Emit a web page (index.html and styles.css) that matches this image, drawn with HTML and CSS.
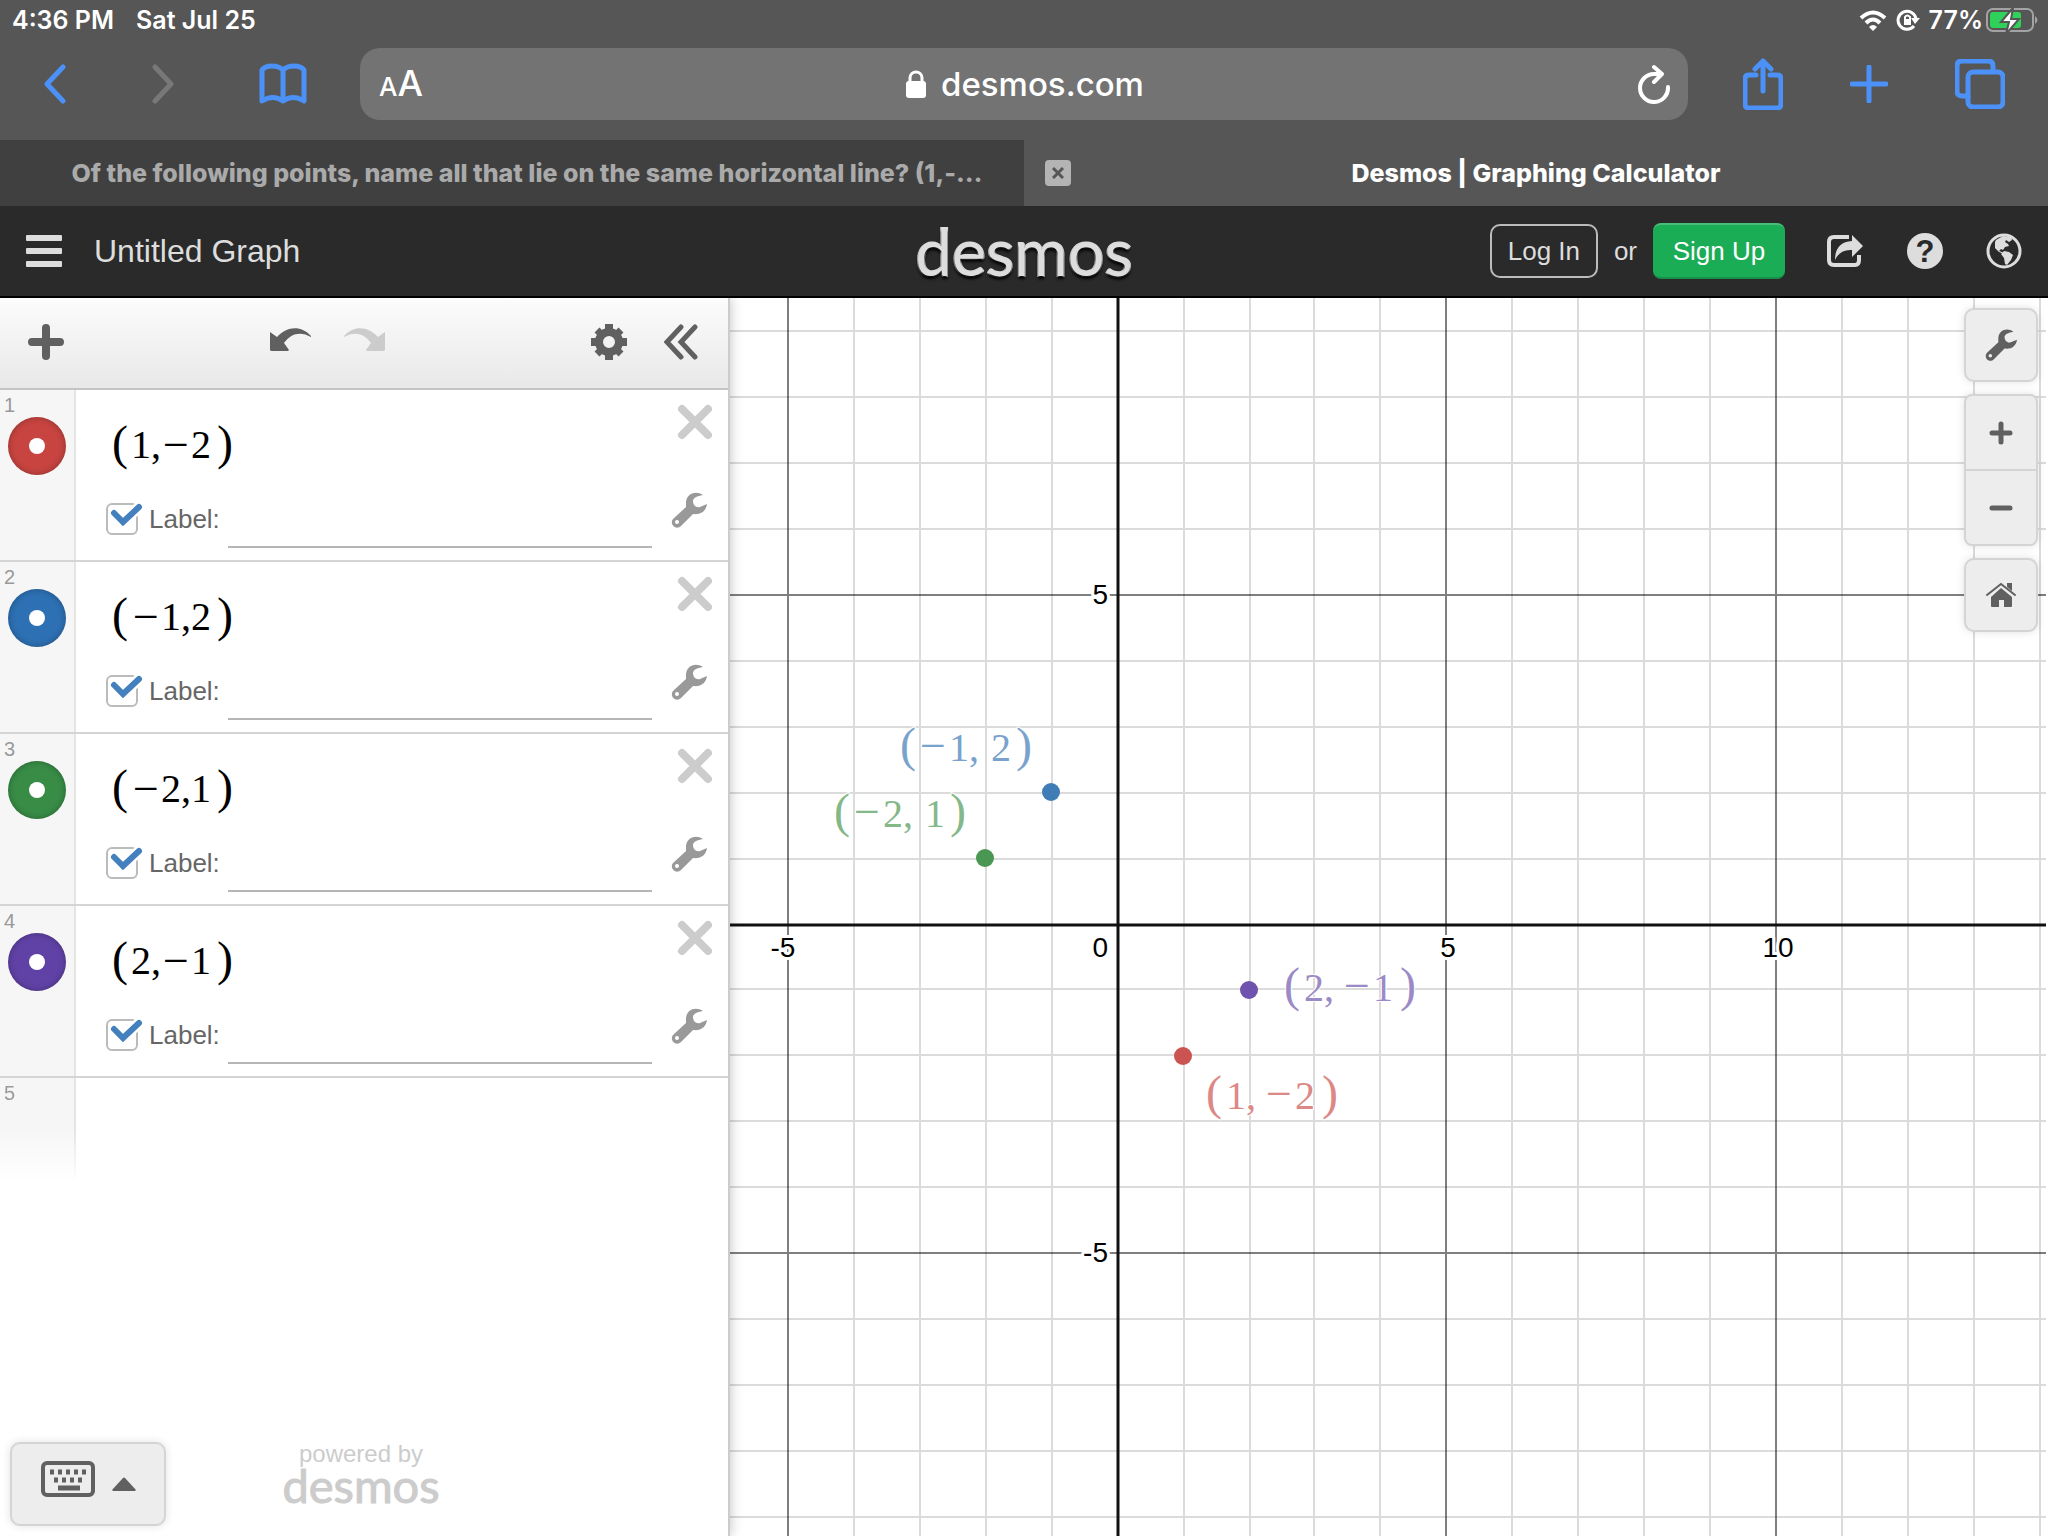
FILE: index.html
```html
<!DOCTYPE html>
<html lang="en">
<head>
<meta charset="utf-8">
<meta name="viewport" content="width=device-width, initial-scale=1">
<title>Desmos | Graphing Calculator</title>
<link rel="stylesheet" href="styles.css">
</head>
<body>
<svg class="defs" aria-hidden="true">
  <symbol id="i-wrench" viewBox="0 0 36 36"><path fill="currentColor" fill-rule="evenodd" d="M32 3C25-2 14 1 15 13v2L2 27c-4 5 3 12 8 7l12-12c8 1 13-3 14-10l-7 3c-4 1-7-2-7-6 0-3 4-5 10-6ZM6 28a2 2 0 1 1 0 4 2 2 0 0 1 0-4Z"/></symbol>
  <symbol id="i-x" viewBox="0 0 36 36"><path fill="none" stroke="currentColor" stroke-width="8" stroke-linecap="round" d="m5 5 26 26M31 5 5 31"/></symbol>
  <symbol id="i-tick" viewBox="0 0 40 34"><path fill="none" stroke="#fff" stroke-width="11" d="m8 13 9 8L33 6"/><path fill="none" stroke="#4480bd" stroke-width="6" stroke-linecap="round" d="m8 12 9 9L33 6"/></symbol>
</svg>

<header class="browser">
  <div class="status">
    <div class="status-side"><span>4:36 PM</span><span>Sat Jul 25</span></div>
    <div class="status-side status-right">
      <svg width="28" height="21" viewBox="0 0 28 21" fill="none" stroke="#fff" stroke-width="4"><path d="M2 8q12-11 24 0M7 13q7-7 14 0"/><path fill="#fff" stroke="none" d="m14 21-4-4q4-4 8 0Z"/></svg>
      <svg width="24" height="22" viewBox="0 0 24 22" fill="none" stroke="#fff" stroke-width="3"><path d="M18 17a9 9 0 1 1 2-7"/><path fill="#fff" stroke="none" d="M15 9h9l-5 6ZM8 10h7v6H8Z"/><path stroke-width="2" d="M9 10V8q2-3 5 0v2"/></svg>
      <span class="percent">77%</span>
      <svg width="54" height="26" viewBox="0 0 54 26"><rect x="1" y="2" width="46" height="22" rx="6" fill="none" stroke="#a3a3a3" stroke-width="2"/><path fill="#a3a3a3" d="M49 9q5 4 0 8Z"/><rect x="4" y="5" width="31" height="16" rx="3" fill="#30d158"/><path fill="#fff" stroke="#555" stroke-width="2" d="M27 1 15 15h8l-3 12 13-15h-8Z"/></svg>
    </div>
  </div>
  <div class="navbar">
    <div class="nav-left">
      <button type="button" aria-label="Back"><svg width="24" height="40" viewBox="0 0 24 40"><path d="M20 3 4 20l16 17"/></svg></button>
      <button type="button" aria-label="Forward" class="dim"><svg width="24" height="40" viewBox="0 0 24 40"><path d="m4 3 16 17L4 37"/></svg></button>
      <button type="button" aria-label="Bookmarks"><svg width="48" height="42" viewBox="0 0 48 42"><path d="M24 7Q20 3 13 3 6 3 3 7v31q11-7 21 0 10-7 21 0V7q-3-4-10-4-7 0-11 4v31"/></svg></button>
    </div>
    <div class="address">
      <button type="button" class="aa" aria-label="Text size"><span class="aa-small">A</span><span>A</span></button>
      <div class="host">
        <svg width="20" height="28" viewBox="0 0 20 28"><rect y="11" width="20" height="17" rx="3" fill="#fff"/><path fill="none" stroke="#fff" stroke-width="3" d="M4 13V8c0-8 12-8 12 0v5"/></svg>
        <span>desmos.com</span>
      </div>
      <button type="button" class="reload" aria-label="Reload"><svg width="34" height="40" viewBox="0 0 34 40"><path d="M31 23A14 14 0 1 1 17 10h8M17 3l8 7-8 8"/></svg></button>
    </div>
    <div class="nav-right">
      <button type="button" aria-label="Share"><svg width="40" height="52" viewBox="0 0 40 52"><path d="M13 17H6q-4 0-4 4v25q0 4 4 4h28q4 0 4-4V21q0-4-4-4h-7M20 33V3M12 11l8-8 8 8"/></svg></button>
      <button type="button" aria-label="New tab"><svg width="38" height="38" viewBox="0 0 38 38"><path d="M19 2v34M2 19h34"/></svg></button>
      <button type="button" aria-label="Show tabs"><svg width="50" height="50" viewBox="0 0 50 50"><path d="M13 37H7q-5 0-5-5V7q0-5 5-5h26q5 0 5 5v5"/><rect x="13" y="13" width="35" height="35" rx="5"/></svg></button>
    </div>
  </div>
  <nav class="tabs" aria-label="Tabs">
    <a class="tab tab-back" href="#"><span>Of the following points, name all that lie on the same horizontal line? (1,-…</span></a>
    <div class="tab tab-active">
      <button type="button" class="tab-close" aria-label="Close tab"><svg width="12" height="12" viewBox="0 0 12 12"><path d="m1 1 10 10M11 1 1 11"/></svg></button>
      <a href="#">Desmos | Graphing Calculator</a>
    </div>
  </nav>
</header>

<div class="appbar">
  <div class="appbar-left">
    <button type="button" aria-label="Menu"><svg width="36" height="32" viewBox="0 0 36 32" fill="#ddd"><rect width="36" height="6" rx="1"/><rect y="13" width="36" height="6" rx="1"/><rect y="26" width="36" height="6" rx="1"/></svg></button>
    <span class="title">Untitled Graph</span>
  </div>
  <a class="wordmark" href="#">desmos</a>
  <div class="appbar-right">
    <button type="button" class="login">Log In</button>
    <span class="or">or</span>
    <button type="button" class="signup">Sign Up</button>
    <div class="appbar-icons">
      <button type="button" aria-label="Share graph"><svg width="38" height="36" viewBox="0 0 38 36"><path fill="none" stroke="#ddd" stroke-width="4" d="M23 4H8Q3 4 3 9v18q0 5 5 5h21q4 0 4-5v-5"/><path fill="#ddd" d="M26 2 37 13 26 24v-7Q14 16 9 27 9 9 26 8Z"/></svg></button>
      <button type="button" aria-label="Help"><svg width="36" height="36" viewBox="0 0 36 36"><circle cx="18" cy="18" r="18" fill="#ddd"/><text x="18" y="29" class="help-mark">?</text></svg></button>
      <button type="button" aria-label="Language"><svg width="36" height="36" viewBox="0 0 36 36"><circle cx="18" cy="18" r="16" fill="none" stroke="#ddd" stroke-width="3"/><path fill="#ddd" d="m10 7 7-4 8 1 1 3-3 2-3-2-1 2 3 2 1 2-4 1-2 3-2-1-2 2 3 1 2 2-5-2-4-4V9Zm8 11 5 1 4 3-2 5-4 5-2-1-1-6-3-4Z"/></svg></button>
    </div>
  </div>
</div>

<main class="calc">
  <section class="panel" aria-label="Expressions">
    <div class="toolbar">
      <button type="button" class="add" aria-label="Add item"><svg width="36" height="36" viewBox="0 0 36 36"><path fill="none" stroke="#606060" stroke-width="8" stroke-linecap="round" d="M18 4v28M4 18h28"/></svg></button>
      <div class="history">
        <button type="button" aria-label="Undo"><svg width="42" height="24" viewBox="0 0 42 24"><path fill="#606060" d="m0 4 7 5C17-2 31-3 41 8v1C31 3 21 5 14 15l5 7-1 1H1l-1-1Z"/></svg></button>
        <button type="button" aria-label="Redo"><svg width="42" height="24" viewBox="0 0 42 24"><path fill="#ccc" d="m42 4-7 5C25-2 11-3 1 8v1c10-6 20-4 27 6l-5 7 1 1h17l1-1Z"/></svg></button>
      </div>
      <div class="tools">
        <button type="button" aria-label="Edit list"><svg width="36" height="36" viewBox="0 0 36 36" fill="none" stroke="#606060"><circle cx="18" cy="18" r="10" stroke-width="8"/><path stroke-width="8" d="M18 0v7M18 29v7M0 18h7M29 18h7"/><path stroke-width="7" d="m6 6 5 5M25 25l5 5M30 6l-5 5M11 25l-5 5"/></svg></button>
        <button type="button" aria-label="Hide list"><svg width="34" height="38" viewBox="0 0 34 38"><path fill="none" stroke="#606060" stroke-width="5" stroke-linecap="round" d="M17 4 3 19l14 15M31 4 17 19l14 15"/></svg></button>
      </div>
    </div>

    <div class="row">
      <div class="gutter"><span class="num">1</span><button type="button" class="dot red" aria-label="Style of point 1"></button></div>
      <div class="expr">
        <div class="math"><span class="par">(</span><span>1,</span><span class="minus">−</span><span>2</span><span class="par">)</span></div>
        <div class="label-line"><label class="check"><input type="checkbox" checked><svg class="tick" width="40" height="34"><use href="#i-tick"/></svg><span>Label:</span></label><input class="label-text" type="text" aria-label="Label text for point 1"></div>
      </div>
      <div class="row-tools"><button type="button" class="del" aria-label="Delete"><svg width="36" height="36"><use href="#i-x"/></svg></button><button type="button" class="wrench" aria-label="Options"><svg width="36" height="36"><use href="#i-wrench"/></svg></button></div>
    </div>
    <div class="row">
      <div class="gutter"><span class="num">2</span><button type="button" class="dot blue" aria-label="Style of point 2"></button></div>
      <div class="expr">
        <div class="math"><span class="par">(</span><span class="minus">−</span><span>1,2</span><span class="par">)</span></div>
        <div class="label-line"><label class="check"><input type="checkbox" checked><svg class="tick" width="40" height="34"><use href="#i-tick"/></svg><span>Label:</span></label><input class="label-text" type="text" aria-label="Label text for point 2"></div>
      </div>
      <div class="row-tools"><button type="button" class="del" aria-label="Delete"><svg width="36" height="36"><use href="#i-x"/></svg></button><button type="button" class="wrench" aria-label="Options"><svg width="36" height="36"><use href="#i-wrench"/></svg></button></div>
    </div>
    <div class="row">
      <div class="gutter"><span class="num">3</span><button type="button" class="dot green" aria-label="Style of point 3"></button></div>
      <div class="expr">
        <div class="math"><span class="par">(</span><span class="minus">−</span><span>2,1</span><span class="par">)</span></div>
        <div class="label-line"><label class="check"><input type="checkbox" checked><svg class="tick" width="40" height="34"><use href="#i-tick"/></svg><span>Label:</span></label><input class="label-text" type="text" aria-label="Label text for point 3"></div>
      </div>
      <div class="row-tools"><button type="button" class="del" aria-label="Delete"><svg width="36" height="36"><use href="#i-x"/></svg></button><button type="button" class="wrench" aria-label="Options"><svg width="36" height="36"><use href="#i-wrench"/></svg></button></div>
    </div>
    <div class="row">
      <div class="gutter"><span class="num">4</span><button type="button" class="dot purple" aria-label="Style of point 4"></button></div>
      <div class="expr">
        <div class="math"><span class="par">(</span><span>2,</span><span class="minus">−</span><span>1</span><span class="par">)</span></div>
        <div class="label-line"><label class="check"><input type="checkbox" checked><svg class="tick" width="40" height="34"><use href="#i-tick"/></svg><span>Label:</span></label><input class="label-text" type="text" aria-label="Label text for point 4"></div>
      </div>
      <div class="row-tools"><button type="button" class="del" aria-label="Delete"><svg width="36" height="36"><use href="#i-x"/></svg></button><button type="button" class="wrench" aria-label="Options"><svg width="36" height="36"><use href="#i-wrench"/></svg></button></div>
    </div>
    <div class="gutter gutter-new"><span class="num">5</span></div>

    <div class="panel-foot">
      <button type="button" class="keypad" aria-label="Show keypad">
        <svg width="54" height="36" viewBox="0 0 54 36"><rect x="2" y="2" width="50" height="32" rx="4" fill="none" stroke="#606060" stroke-width="4"/><path stroke="#606060" stroke-width="5" d="M9 11h4m4 0h4m4 0h4m4 0h4m4 0h4M13 19h4m4 0h4m4 0h4m4 0h4M17 27h22"/></svg>
        <svg class="caret" width="24" height="14" viewBox="0 0 24 14"><path fill="#606060" d="M11 1q1-1 2 0l11 12-1 1H1l-1-1Z"/></svg>
      </button>
      <div class="powered"><span>powered by</span><span class="powered-mark">desmos</span></div>
      <div></div>
    </div>
  </section>

  <section class="graph" aria-label="Graph">
    <svg class="plot" id="plot">
      <g id="origin" transform="translate(390 627)">
        <path id="minor" class="minor"/>
        <path id="major" class="major"/>
        <path id="axes" class="axes"/>
        <g class="ticks">
          <text x="-335" y="32" text-anchor="middle">-5</text>
          <text x="-10" y="32" text-anchor="end">0</text>
          <text x="330" y="32" text-anchor="middle">5</text>
          <text x="660" y="32" text-anchor="middle">10</text>
          <text x="-10" y="-321" text-anchor="end">5</text>
          <text x="-10" y="337" text-anchor="end">-5</text>
        </g>
        <circle cx="-67" cy="-133" r="9" fill="#407db7"/>
        <circle cx="-133" cy="-67" r="9" fill="#4a9653"/>
        <circle cx="131" cy="65" r="9" fill="#6f52ad"/>
        <circle cx="65" cy="131" r="9" fill="#cb5452"/>
        <g class="plabel">
          <text x="-218" y="-164" fill="#79a3cc"><tspan class="plabel-par">(</tspan><tspan class="plabel-minus" dx="4">−</tspan><tspan dx="3">1</tspan><tspan>, </tspan><tspan dx="2">2</tspan><tspan class="plabel-par" dx="5">)</tspan></text>
          <text x="-284" y="-98" fill="#85b889"><tspan class="plabel-par">(</tspan><tspan class="plabel-minus" dx="4">−</tspan><tspan dx="3">2</tspan><tspan>, </tspan><tspan dx="2">1</tspan><tspan class="plabel-par" dx="5">)</tspan></text>
          <text x="166" y="76" fill="#9b8ac6"><tspan class="plabel-par">(</tspan><tspan dx="4">2</tspan><tspan>, </tspan><tspan class="plabel-minus">−</tspan><tspan dx="3">1</tspan><tspan class="plabel-par" dx="7">)</tspan></text>
          <text x="88" y="184" fill="#dc8886"><tspan class="plabel-par">(</tspan><tspan dx="4">1</tspan><tspan>, </tspan><tspan class="plabel-minus">−</tspan><tspan dx="3">2</tspan><tspan class="plabel-par" dx="7">)</tspan></text>
        </g>
      </g>
    </svg>
    <div class="controls">
      <button type="button" class="ctl" aria-label="Graph settings"><svg width="32" height="32" color="#606060"><use href="#i-wrench"/></svg></button>
      <div class="zoom">
        <button type="button" aria-label="Zoom in"><svg width="24" height="24" viewBox="0 0 24 24"><path stroke="#606060" stroke-width="5" stroke-linecap="round" d="M12 3v18M3 12h18"/></svg></button>
        <button type="button" aria-label="Zoom out"><svg width="24" height="24" viewBox="0 0 24 24"><path stroke="#606060" stroke-width="5" stroke-linecap="round" d="M3 12h18"/></svg></button>
      </div>
      <button type="button" class="ctl" aria-label="Default view"><svg width="30" height="26" viewBox="0 0 30 26"><path fill="#606060" d="M15 6 26 15v9q0 1-1 1h-7v-7h-5v7H6q-1 0-1-1v-9Z"/><path fill="none" stroke="#606060" stroke-width="2" stroke-linecap="round" d="M1 13 15 2l14 11"/><path fill="#606060" d="M21 1h5v8l-5-4Z"/></svg></button>
    </div>
  </section>
</main>
<script src="script.js"></script>
</body>
</html>
```
FILE: styles.css
```css
* { box-sizing: border-box; }
body {
  margin: 0;
  min-height: 100vh;
  display: flex;
  flex-direction: column;
  background: #fff;
  font-family: "Liberation Sans", Arial, sans-serif;
}
button { margin: 0; padding: 0; border: 0; background: none; font: inherit; color: inherit; display: flex; align-items: center; justify-content: center; }
a { color: inherit; text-decoration: none; }
svg { display: block; flex: none; }
.defs { position: absolute; width: 0; height: 0; }

/* browser chrome */
.browser { background: #565656; color: #fff; font-family: Inter, sans-serif; }
.status { display: flex; justify-content: space-between; height: 40px; padding: 0 8px 0 12px; font-size: 25px; font-weight: 600; }
.status-side { display: flex; align-items: center; gap: 22px; }
.status-right { gap: 9px; }
.percent { margin-right: -6px; }
.navbar { display: grid; grid-template-columns: 360px 1fr 360px; align-items: center; height: 100px; padding-bottom: 12px; }
.nav-left { display: flex; align-items: center; padding-left: 43px; gap: 84px; }
.nav-left svg, .nav-right svg { fill: none; stroke: #4b91f7; stroke-width: 5; stroke-linecap: round; stroke-linejoin: round; }
.nav-left .dim svg { stroke: #787878; }
.nav-right { display: flex; align-items: center; justify-content: space-between; padding: 0 43px 0 55px; }
.address { display: grid; grid-template-columns: 1fr auto 1fr; align-items: center; height: 72px; padding: 0 17px 0 19px; border-radius: 20px; background: #737373; }
.aa { justify-self: start; align-items: baseline; font-size: 36px; font-weight: 500; line-height: 44px; padding-top: 2px; }
.aa-small { font-size: 26px; }
.host { display: flex; align-items: center; gap: 15px; font-size: 33px; font-weight: 500; }
.reload { justify-self: end; }
.reload svg { fill: none; stroke: #fff; stroke-width: 4; stroke-linecap: round; stroke-linejoin: round; }
.tabs { display: grid; grid-template-columns: 1fr 1fr; height: 66px; font-size: 25px; font-weight: 800; }
.tab { display: flex; align-items: center; justify-content: center; min-width: 0; white-space: nowrap; }
.tab-back { padding-left: 30px; background: #404040; color: #aaa; }
.tab-active { display: grid; grid-template-columns: 1fr auto 1fr; }
.tab-close { justify-self: start; margin-left: 21px; width: 26px; height: 26px; border-radius: 4px; background: #b4b4b4; }
.tab-close svg { stroke: #565656; stroke-width: 3; }

/* application bar */
.appbar { display: grid; grid-template-columns: 1fr auto 1fr; align-items: center; height: 92px; padding: 0 26px; border-bottom: 2px solid #000; background: #2a2a2a; color: #ddd; }
.appbar-left { display: flex; align-items: center; gap: 32px; }
.title { font-size: 32px; }
.wordmark, .powered-mark { font-family: Lato, sans-serif; font-weight: 400; paint-order: stroke; stroke-linejoin: round; }
.wordmark { font-size: 65px; line-height: 80px; -webkit-text-stroke: 2px currentColor; text-shadow: 0 3px 3px #000; }
.appbar-right { display: flex; align-items: center; justify-content: flex-end; font-size: 26px; }
.login { width: 108px; height: 54px; border: 2px solid #bbb; border-radius: 10px; }
.or { margin: 0 16px; }
.signup { width: 132px; height: 56px; border-radius: 8px; background: #1bac56; border-top: 2px solid #48bd77; border-bottom: 2px solid #16914a; color: #fff; }
.appbar-icons { display: flex; gap: 43px; margin-left: 41px; }
.appbar-icons button { height: 36px; }
.help-mark { font: 700 31px "Liberation Sans", sans-serif; text-anchor: middle; fill: #2a2a2a; }

/* calculator */
.calc { flex: 1; display: grid; grid-template-columns: 730px 1fr; }
.panel { display: flex; flex-direction: column; position: relative; z-index: 1; border-right: 2px solid #ccc; background: #fff; box-shadow: 0 0 12px rgba(0, 0, 0, .25); clip-path: inset(0 -20px 0 0); }
.toolbar { display: grid; grid-template-columns: 1fr auto 1fr; height: 92px; padding: 0 30px 2px 28px; border-bottom: 2px solid #c4c4c4; background: linear-gradient(#fcfcfc, #e8e8e8); align-items: center; }
.add { justify-self: start; }
.history { display: flex; gap: 31px; margin-right: 72px; }
.history button { height: 28px; align-items: flex-start; }
.tools { display: flex; align-items: center; justify-content: flex-end; gap: 37px; }
.row { display: grid; grid-template-columns: 76px 1fr 76px; border-bottom: 2px solid #d4d4d4; }
.gutter { display: flex; flex-direction: column; align-items: flex-start; padding: 4px 0 0 4px; border-right: 2px solid #e4e4e4; background: #f6f6f6; }
.num { font-size: 20px; line-height: 22px; color: #999; }
.dot { width: 58px; height: 58px; margin: 1px 0 0 4px; border-radius: 50%; box-shadow: inset 0 0 6px rgba(0, 0, 0, .3); }
.dot::after { content: ""; width: 16px; height: 16px; border-radius: 50%; background: #fff; }
.red { background: #c74440; }
.blue { background: #2d70b3; }
.green { background: #388c46; }
.purple { background: #6042a6; }
.expr { padding: 0 0 12px 30px; }
.math { display: flex; align-items: center; height: 108px; padding-left: 6px; font-family: "Liberation Serif", "Times New Roman", serif; font-size: 40px; color: #000; }
.par { font-size: 48px; margin-bottom: 4px; }
.par:first-child { margin-right: 3px; }
.par:last-child { margin-left: 6px; }
.minus { margin: 0 2px; font-size: 46px; }
.label-line { display: flex; gap: 8px; height: 50px; }
.check { display: flex; align-items: center; gap: 11px; position: relative; height: 32px; margin-top: 5px; font-size: 26px; color: #666; }
.check input { appearance: none; width: 32px; height: 32px; margin: 0; border: 2px solid #bbb; border-radius: 6px; background: #fff; }
.tick { position: absolute; left: 0; top: -2px; }
.label-text { flex: 1; min-width: 0; padding: 0; border: 0; border-bottom: 2px solid #b5b5b5; background: none; font: inherit; font-size: 26px; outline: 0; }
.row-tools { display: flex; flex-direction: column; align-items: flex-end; gap: 52px; padding: 14px 15px 0 0; }
.del { color: #ccc; }
.wrench { color: #999; margin-right: 6px; }
.gutter-new { width: 76px; height: 104px; border-right: 0; background: linear-gradient(90deg, transparent 74px, #e4e4e4 74px), #f6f6f6; -webkit-mask: linear-gradient(#000 50%, transparent); mask: linear-gradient(#000 50%, transparent); }
.panel-foot { display: grid; grid-template-columns: 1fr auto 1fr; align-items: end; margin-top: auto; padding: 0 16px 10px 10px; }
.keypad, .ctl, .zoom { border: 2px solid #d4d4d4; border-radius: 10px; background: #ededed; box-shadow: 0 0 8px rgba(0, 0, 0, .12); }
.keypad { width: 156px; height: 84px; gap: 17px; padding-bottom: 10px; justify-self: start; }
.caret { margin-top: 10px; }
.powered { display: flex; flex-direction: column; align-items: center; padding-bottom: 22px; font-size: 24px; line-height: 24px; color: #ccc; }
.powered-mark { font-size: 47px; line-height: 38px; -webkit-text-stroke: 1px currentColor; }

/* graph paper */
.graph { position: relative; overflow: hidden; min-width: 0; }
.plot { position: absolute; inset: 0; width: 100%; height: 100%; margin-left: -2px; }
.minor { stroke: rgba(0, 0, 0, .14); stroke-width: 2; }
.major { stroke: rgba(0, 0, 0, .5); stroke-width: 2; }
.axes { stroke: #111; stroke-width: 3; }
.ticks, .plabel { paint-order: stroke; stroke: #fff; stroke-linejoin: round; }
.ticks { font-size: 28px; fill: #000; stroke-width: 6px; }
.plabel { font-family: "Liberation Serif", "Times New Roman", serif; font-size: 40px; stroke-width: 2px; }
.plabel text { white-space: pre; }
.plabel-par { font-size: 48px; }
.plabel-minus { font-size: 46px; }
.controls { position: absolute; top: 10px; right: 10px; display: flex; flex-direction: column; gap: 12px; width: 74px; }
.ctl { height: 74px; }
.zoom { overflow: hidden; border-radius: 8px; }
.zoom button { width: 100%; height: 73px; }
.zoom button + button { height: 75px; border-top: 2px solid #d4d4d4; }
```
FILE: script.js
```js
// Rules the graph paper over whatever area the window gives the plot.
// Lines are snapped to even pixels so that each one stays crisp.
(function () {
  var UNIT = 32.92;
  var ORIGIN_X = 390;
  var ORIGIN_Y = 627;
  var plot = document.getElementById('plot');

  function place(k, shift) {
    return 2 * Math.floor(k * UNIT + shift);
  }

  function draw() {
    var box = plot.getBoundingClientRect();
    var left = -ORIGIN_X, right = box.width - ORIGIN_X + 2;
    var top = -ORIGIN_Y, bottom = box.height - ORIGIN_Y;
    var minor = '', major = '';
    var k, p, line;
    for (k = Math.ceil(left / (2 * UNIT)); k * 2 * UNIT < right; k++) {
      if (k === 0) continue;
      p = place(k, 0.17);
      line = 'M' + p + ' ' + top + 'V' + bottom;
      if (k % 5) minor += line; else major += line;
    }
    for (k = Math.ceil(top / (2 * UNIT)); k * 2 * UNIT < bottom; k++) {
      if (k === 0) continue;
      p = place(k, -0.05);
      line = 'M' + left + ' ' + p + 'H' + right;
      if (k % 5) minor += line; else major += line;
    }
    document.getElementById('minor').setAttribute('d', minor);
    document.getElementById('major').setAttribute('d', major);
    document.getElementById('axes').setAttribute('d',
      'M0 ' + top + 'V' + bottom + 'M' + left + ' 0H' + right);
  }

  window.addEventListener('resize', draw);
  draw();
})();
```
